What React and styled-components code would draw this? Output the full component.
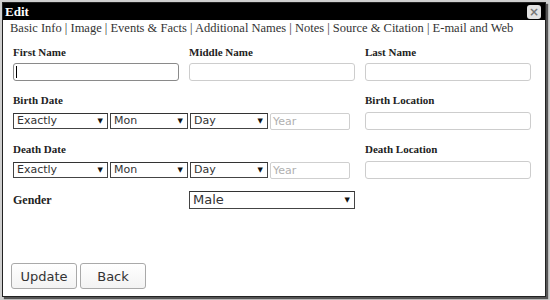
import React from "react";
import styled, { createGlobalStyle } from "styled-components";

const Global = createGlobalStyle`
  html, body { margin: 0; padding: 0; }
  body { background: #cfcfcf; width: 550px; height: 300px; overflow: hidden; }
  * { box-sizing: border-box; }
`;

const Page = styled.div`
  padding: 2px 0 0 2px;
`;

const Dialog = styled.div`
  width: 544px;
  height: 295px;
  background: #fff;
  border: 1px solid #222;
  box-shadow: 2px 2px 1px #555;
  display: flex;
  flex-direction: column;
`;

const TitleBar = styled.div`
  height: 17px;
  background: #000;
  color: #fff;
  font: bold 13px "Liberation Serif", serif;
  line-height: 17px;
  padding: 0 4px 0 2px;
  display: flex;
  align-items: center;
  justify-content: space-between;
`;

const CloseBtn = styled.div`
  width: 14px;
  height: 14px;
  border-radius: 3px;
  background: #e2e2e2;
  color: #777;
  font: bold 12px "DejaVu Sans", sans-serif;
  line-height: 14px;
  text-align: center;
`;

const Tabs = styled.div`
  padding: 0 0 0 7px;
  font: 12.5px "Liberation Serif", serif;
  color: #333;
  line-height: 16px;
`;

const Form = styled.div`
  padding: 9px 0 0 10px;
  display: flex;
  flex-direction: column;
  gap: 12px;
`;

const Row = styled.div`
  display: grid;
  grid-template-columns: 176px 176px 176px;
`;

const Field = styled.div`
  display: flex;
  flex-direction: column;
  gap: ${(p) => p.$gap || 4}px;
`;

const Label = styled.div`
  font: bold ${(p) => p.$size || 11}px "Liberation Serif", serif;
  color: #222;
  line-height: 14px;
  height: 14px;
`;

const TextInput = styled.div`
  width: 166px;
  height: 18px;
  border: 1px solid ${(p) => (p.$focus ? "#8a8a8a" : "#cdcdcd")};
  border-radius: 3px;
  background: #fff;
  position: relative;
`;

const Caret = styled.span`
  position: absolute;
  left: 2px;
  top: 2px;
  width: 1px;
  height: 12px;
  background: #000;
`;

const DateRow = styled.div`
  display: flex;
  gap: 2px;
`;

const SelectBox = styled.div`
  position: relative;
  width: ${(p) => p.$w}px;
  height: ${(p) => p.$h || 16}px;
  border: 1px solid #444;
  border-top-color: #333;
  background: #fff;
  font: ${(p) => p.$fs || 11}px "DejaVu Sans", sans-serif;
  color: #333;
  line-height: ${(p) => (p.$h || 16) - 2}px;
  padding-left: 3px;
`;

const Arrow = styled.span`
  position: absolute;
  right: 4px;
  top: 0;
  font-size: 7px;
  color: #111;
`;

const YearInput = styled.div`
  width: 80px;
  height: 17px;
  border: 1px solid #cfcfcf;
  border-radius: 2px;
  font: 11px "DejaVu Sans", sans-serif;
  color: #b0b0b0;
  line-height: 15px;
  padding-left: 2px;
`;

const GenderRow = styled.div`
  display: grid;
  grid-template-columns: 176px 176px;
  align-items: center;
`;

const Buttons = styled.div`
  margin-top: auto;
  padding: 0 0 7px 8px;
  display: flex;
  gap: 3px;
`;

const Button = styled.div`
  width: 66px;
  height: 26px;
  border: 1px solid #a9a9a9;
  border-radius: 3px;
  background: linear-gradient(#ffffff, #f3f3f3);
  font: 13px "DejaVu Sans", sans-serif;
  color: #333;
  display: flex;
  align-items: center;
  justify-content: center;
`;

function Select({ w, h, fs, children }) {
  return (
    <SelectBox $w={w} $h={h} $fs={fs}>
      {children}
      <Arrow style={h ? { lineHeight: `${h - 2}px` } : { lineHeight: "14px" }}>▼</Arrow>
    </SelectBox>
  );
}

function DateControls() {
  return (
    <DateRow>
      <Select w={95}>Exactly</Select>
      <Select w={78}>Mon</Select>
      <Select w={78}>Day</Select>
      <YearInput>Year</YearInput>
    </DateRow>
  );
}

export default function App() {
  return (
    <>
      <Global />
      <Page>
        <Dialog>
          <TitleBar>
            <span>Edit</span>
            <CloseBtn>×</CloseBtn>
          </TitleBar>
          <Tabs>
            Basic Info | Image | Events &amp; Facts | Additional Names | Notes | Source &amp; Citation | E-mail and Web
          </Tabs>
          <Form>
            <Row>
              <Field>
                <Label>First Name</Label>
                <TextInput $focus>
                  <Caret />
                </TextInput>
              </Field>
              <Field>
                <Label>Middle Name</Label>
                <TextInput />
              </Field>
              <Field>
                <Label>Last Name</Label>
                <TextInput />
              </Field>
            </Row>
            <Row>
              <Field style={{ gridColumn: "1 / 3" }} $gap={6}>
                <Label>Birth Date</Label>
                <DateControls />
              </Field>
              <Field $gap={5}>
                <Label>Birth Location</Label>
                <TextInput />
              </Field>
            </Row>
            <Row>
              <Field style={{ gridColumn: "1 / 3" }} $gap={6}>
                <Label>Death Date</Label>
                <DateControls />
              </Field>
              <Field $gap={5}>
                <Label>Death Location</Label>
                <TextInput />
              </Field>
            </Row>
            <GenderRow>
              <Label $size={12}>Gender</Label>
              <Select w={166} h={18} fs={13}>Male</Select>
            </GenderRow>
          </Form>
          <Buttons>
            <Button>Update</Button>
            <Button>Back</Button>
          </Buttons>
        </Dialog>
      </Page>
    </>
  );
}
